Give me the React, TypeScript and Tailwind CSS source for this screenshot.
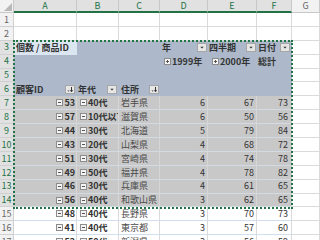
import type { ReactNode } from "react";

const COLS = ["A", "B", "C", "D", "E", "F", "G"];

type Row = {
  a?: string;
  b?: string;
  c?: string;
  d?: string;
  e?: string;
  f?: string;
};

const data: Row[] = [
  { a: "53", b: "40代", c: "岩手県", d: "6", e: "67", f: "73" },
  { a: "57", b: "10代以下", c: "滋賀県", d: "6", e: "50", f: "56" },
  { a: "44", b: "30代", c: "北海道", d: "5", e: "79", f: "84" },
  { a: "43", b: "20代", c: "山梨県", d: "4", e: "68", f: "72" },
  { a: "51", b: "30代", c: "宮崎県", d: "4", e: "74", f: "78" },
  { a: "49", b: "50代", c: "福井県", d: "4", e: "78", f: "82" },
  { a: "46", b: "30代", c: "兵庫県", d: "4", e: "61", f: "65" },
  { a: "56", b: "40代", c: "和歌山県", d: "3", e: "62", f: "65" },
  { a: "48", b: "40代", c: "長野県", d: "3", e: "70", f: "73" },
  { a: "41", b: "40代", c: "東京都", d: "3", e: "57", f: "60" },
  { a: "52", b: "50代", c: "新潟県", d: "3", e: "56", f: "59" },
];

//small +/- box in front of pivot items
const ExpBox = ({ plus }: { plus?: boolean }) => (
  <svg width="7" height="7" viewBox="0 0 7 7" className="shrink-0 mr-[1px]">
    <rect x="0.5" y="0.5" width="6" height="6" fill="#f4f4f4" stroke="#8c8c8c" />
    <path d="M2 3.5H5" stroke="#555" />
    {plus && <path d="M3.5 2V5" stroke="#555" />}
  </svg>
);

//dropdown button of pivot fields
const Drop = ({ sort }: { sort?: boolean }) => (
  <svg width="10" height="9" viewBox="0 0 10 9" className="shrink-0 ml-auto">
    <rect x="0.5" y="0.5" width="9" height="8" fill="#e6e6e6" stroke="#a6a6a6" />
    {sort ? (
      <>
        <path d="M2.5 5.5L4.5 5.5L3.5 6.7Z" fill="#333" />
        <path d="M6.5 2V6.5" stroke="#333" />
        <path d="M5.3 5.3L6.5 6.8L7.7 5.3" stroke="#333" fill="none" />
      </>
    ) : (
      <path d="M3.3 3.8H6.7L5 5.6Z" fill="#333" />
    )}
  </svg>
);

const Cell = ({
  children,
  className = "",
}: {
  children?: ReactNode;
  className?: string;
}) => (
  <div
    className={`flex items-center overflow-hidden whitespace-nowrap ${className}`}
  >
    {children}
  </div>
);

const RowHead = ({ n, sel }: { n: number; sel?: boolean }) => (
  <div
    className={`flex items-center justify-center border-r border-b border-[#d0d0d0] text-[9px] ${
      sel ? "bg-[#e1e1e1] text-[#217346]" : "bg-[#f2f2f2] text-[#666]"
    }`}
  >
    {n}
  </div>
);

const plain = "border-r border-b border-[#dadada] bg-white";
const head = "bg-[#adb9ca]";
const tint = "bg-[#c8c8c8] border-r border-b border-r-[#d6d6d6] border-b-[#d2dae4]";
const pvt = "bg-white border-r border-b border-r-[#dadada] border-b-[#cfdff0]";

const App = () => {
  return (
    <div className="relative w-[320px] h-[240px] overflow-hidden bg-white font-['Noto_Sans_CJK_JP',sans-serif] text-[9px] text-[#333]">
      <div className="grid grid-cols-[14px_63px_42px_41px_48px_49px_35px_1fr] grid-rows-[13px_repeat(18,13.9px)]">
        {/* column headers */}
        <div className="relative bg-[#f2f2f2] border-r border-b border-[#c8c8c8]">
          <svg width="8" height="8" viewBox="0 0 8 8" className="absolute right-[1px] bottom-[1px]">
            <path d="M8 0V8H0Z" fill="#b8b8b8" />
          </svg>
        </div>
        {COLS.map((c) => (
          <div
            key={c}
            className={`flex items-center justify-center border-r border-[#c8c8c8] text-[9px] ${
              c === "G"
                ? "bg-[#f2f2f2] text-[#666] border-b"
                : "bg-[#e1e1e1] text-[#217346] border-b-2 border-b-[#217346]"
            }`}
          >
            {c}
          </div>
        ))}

        {/* rows 1-2 */}
        {[1, 2].map((n) => (
          <div key={n} className="contents">
            <RowHead n={n} />
            {COLS.map((c) => (
              <div key={c} className={plain} />
            ))}
          </div>
        ))}

        {/* row 3 */}
        <RowHead n={3} sel />
        <Cell className="bg-[#dce6f1] font-bold pl-[2px]">個数 / 商品ID</Cell>
        <Cell className={head} />
        <Cell className={head} />
        <Cell className={`${head} font-bold pl-[2px] pr-[1px]`}>
          年<Drop />
        </Cell>
        <Cell className={`${head} font-bold pl-[1px] pr-[1px]`}>
          四半期<Drop />
        </Cell>
        <Cell className={`${head} font-bold pl-[1px] pr-[2px]`}>
          日付<Drop />
        </Cell>
        <div className={plain} />

        {/* row 4 */}
        <RowHead n={4} sel />
        <Cell className={head} />
        <Cell className={head} />
        <Cell className={head} />
        <Cell className={`${head} font-bold pl-[4px]`}>
          <ExpBox plus />
          1999年
        </Cell>
        <Cell className={`${head} font-bold pl-[4px]`}>
          <ExpBox plus />
          2000年
        </Cell>
        <Cell className={`${head} font-bold pl-[1px]`}>総計</Cell>
        <div className={plain} />

        {/* row 5 */}
        <RowHead n={5} sel />
        {["A", "B", "C", "D", "E", "F"].map((c) => (
          <Cell key={c} className={head} />
        ))}
        <div className={plain} />

        {/* row 6 */}
        <RowHead n={6} sel />
        <Cell className={`${head} font-bold pl-[2px] pr-[2px]`}>
          顧客ID<Drop sort />
        </Cell>
        <Cell className={`${head} font-bold pl-[1px] pr-[2px]`}>
          年代<Drop />
        </Cell>
        <Cell className={`${head} font-bold pl-[2px] pr-[1px]`}>
          住所<Drop sort />
        </Cell>
        <Cell className={head} />
        <Cell className={head} />
        <Cell className={head} />
        <div className={plain} />

        {/* data rows */}
        {data.map((r, i) => {
          const n = i + 7;
          const bg = n <= 14 ? tint : pvt;
          return (
            <div key={n} className="contents">
              <RowHead n={n} sel={n <= 14} />
              <Cell className={`${bg} justify-end font-bold pr-[1px]`}>
                <ExpBox />
                {r.a}
              </Cell>
              <Cell className={`${bg} font-bold pl-[3px]`}>
                <ExpBox />
                {r.b}
              </Cell>
              <Cell className={`${bg} pl-[2px] text-[#4a4a4a]`}>{r.c}</Cell>
              <Cell className={`${bg} justify-end pr-[2px]`}>{r.d}</Cell>
              <Cell className={`${bg} justify-end pr-[2px]`}>{r.e}</Cell>
              <Cell className={`${bg} justify-end pr-[3px]`}>{r.f}</Cell>
              <div className={plain} />
            </div>
          );
        })}
      </div>

      {/* copy marquee around A3:F14 */}
      <div className="pointer-events-none absolute left-[13px] top-[40px] w-[280px] h-[169px] border-2 border-dotted border-[#217346]" />
    </div>
  );
};

export default App;
